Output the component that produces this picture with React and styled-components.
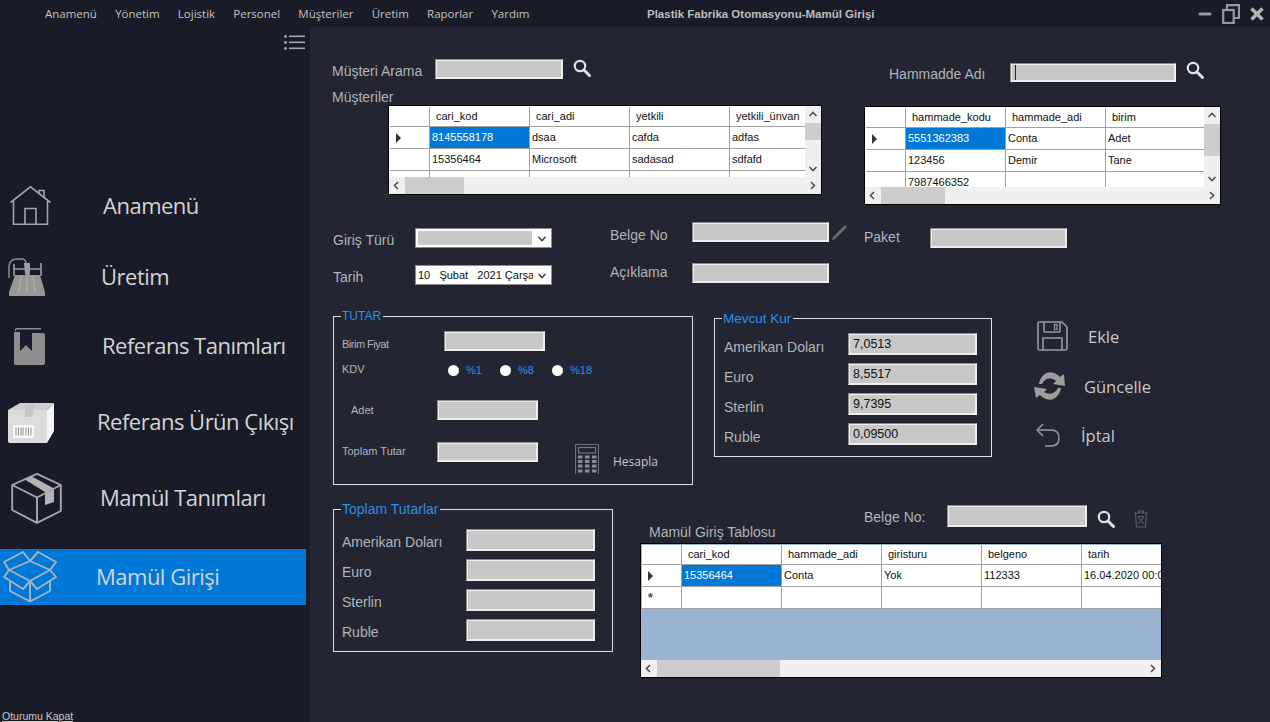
import React from 'react';
import styled, { createGlobalStyle } from 'styled-components';

const GlobalStyle = createGlobalStyle`
  html, body {
    margin: 0;
    padding: 0;
    height: 100%;
    background: #232533;
    overflow: hidden;
  }
  #root { height: 100%; }
`;

const sans = `"Liberation Sans", Arial, sans-serif`;
const humanist = `"Open Sans", "Noto Sans", sans-serif`;

const Page = styled.div`
  width: 1270px;
  height: 722px;
  display: flex;
  flex-direction: column;
  overflow: hidden;
  font-family: ${sans};
`;

const TitleBar = styled.div`
  height: 27px;
  flex: none;
  display: grid;
  grid-template-columns: 647px 1fr auto;
  align-items: center;
  background: #191b28;
`;

const Menu = styled.div`
  display: flex;
  gap: 18.2px;
  padding-left: 45px;
  font: 11.5px ${humanist};
  color: #c4c4c4;
`;

const WindowTitle = styled.div`
  font: bold 11.5px ${sans};
  color: #bdbdbd;
`;

const WinButtons = styled.div`
  display: flex;
  align-items: center;
  gap: 10px;
  padding-right: 6px;
  color: #9a9a9a;
`;

const Body = styled.div`
  flex: 1;
  display: flex;
  min-height: 0;
`;

const Sidebar = styled.aside`
  width: 310px;
  flex: none;
  display: flex;
  flex-direction: column;
  background: #191b28;
`;

const ListToggle = styled.div`
  height: 151px;
  padding: 8px 1px 0 0;
  width: 306px;
  box-sizing: border-box;
  display: flex;
  justify-content: flex-end;
  align-items: flex-start;
`;

const NavItem = styled.div`
  width: 306px;
  height: 56px;
  flex: none;
  display: flex;
  align-items: center;
  margin-top: ${(p) => p.$gap}px;
  background: ${(p) => (p.$active ? '#0078d7' : 'transparent')};
`;

const NavIcon = styled.div`
  width: ${(p) => p.$labelX}px;
  flex: none;
  box-sizing: border-box;
  padding-left: ${(p) => p.$iconX}px;
  display: flex;
  align-items: center;
`;

const NavLabel = styled.span`
  font: 22px ${humanist};
  letter-spacing: -0.5px;
  color: #d4d4d4;
  white-space: nowrap;
  padding-bottom: 2px;
`;

const LogoutLink = styled.a`
  margin-top: auto;
  padding-left: 2px;
  height: 12px;
  font: 10.5px/12px ${sans};
  color: #c8c8c8;
  text-decoration: underline;
`;

const Main = styled.main`
  flex: 1;
  background: #232533;
  padding-left: 22px;
  color: #b1b4b8;
  font-size: 14px;
`;

const TopRow = styled.div`
  display: flex;
  height: 195px;
`;

const CustomerBlock = styled.section`
  width: 532px;
  flex: none;
  padding-top: 32px;
`;

const MaterialBlock = styled.section`
  flex: 1;
  padding-top: 36px;
`;

const Inline = styled.div`
  display: flex;
  align-items: center;
  margin-left: ${(p) => p.$left || 0}px;
  margin-top: ${(p) => p.$top || 0}px;
`;

const Label = styled.span`
  width: ${(p) => (p.$width ? `${p.$width}px` : 'auto')};
  flex: none;
  white-space: nowrap;
  font-size: ${(p) => p.$size || 14}px;
  letter-spacing: ${(p) => p.$tracking || 0}px;
  transform: translateY(${(p) => p.$shift || 0}px);
`;

const ListCaption = styled.div`
  height: 16px;
  margin-top: 10px;
  line-height: 16px;
  white-space: nowrap;
`;

const TextBox = styled.div`
  width: ${(p) => p.$width}px;
  height: ${(p) => p.$height || 20}px;
  flex: none;
  box-sizing: border-box;
  background: #c8c8c8;
  border: 1px solid #8c8c8c;
  border-right-color: #eee;
  border-bottom-color: #eee;
  box-shadow: inset 0 0 0 1px #eee;
  padding: 0 0 0 4px;
  display: flex;
  align-items: center;
  font-size: 12.5px;
  color: #111;
`;

const Caret = styled.span`
  width: 1px;
  height: 15px;
  background: #222;
`;

const SearchButton = styled.div`
  margin-left: ${(p) => p.$left || 10}px;
  display: flex;
  transform: translateY(${(p) => p.$shift || 0}px);
`;

const Spacer = styled.div`
  height: ${(p) => p.$height}px;
`;

const GridFrame = styled.div`
  width: ${(p) => p.$width}px;
  height: ${(p) => p.$height}px;
  box-sizing: border-box;
  border: 1px solid #000;
  background: #fff;
  display: grid;
  grid-template-columns: ${(p) => (p.$vbar ? '1fr 16px' : '1fr')};
  grid-template-rows: 1fr 17px;
  margin-left: ${(p) => p.$left || 0}px;
  color: #111;
  font-size: 11px;
`;

const GridBody = styled.div`
  overflow: hidden;
  padding-top: 1px;
  padding-left: 1px;
  background: ${(p) => p.$empty || '#fff'};
`;

const GridRow = styled.div`
  display: flex;
  height: ${(p) => (p.$head ? 20 : 22)}px;
  width: max-content;
  box-sizing: border-box;
  background: #fff;
  border-bottom: 1px solid #a0a0a0;
`;

const RowHeader = styled.div`
  width: 40px;
  flex: none;
  box-sizing: border-box;
  border-right: 1px solid #a0a0a0;
  display: flex;
  align-items: center;
  padding-left: 5px;
  color: #444;
`;

const Triangle = styled.span`
  width: 0;
  height: 0;
  margin-left: 1px;
  border-left: 5px solid #333;
  border-top: 5px solid transparent;
  border-bottom: 5px solid transparent;
`;

const NewRowStar = styled.span`
  font-size: 12px;
  font-weight: bold;
  margin-left: 1px;
  line-height: 12px;
`;

const Cell = styled.div`
  width: 100px;
  flex: none;
  box-sizing: border-box;
  border-right: 1px solid #a0a0a0;
  padding-left: ${(p) => (p.$head ? 6 : 2)}px;
  padding-bottom: 1px;
  display: flex;
  align-items: center;
  white-space: nowrap;
  overflow: hidden;
  background: ${(p) => (p.$selected ? '#0078d7' : '#fff')};
  color: ${(p) => (p.$selected ? '#fff' : '#111')};
`;

const VBar = styled.div`
  grid-row: 1;
  grid-column: 2;
  background: #f0f0f0;
  display: flex;
  flex-direction: column;
  align-items: center;
`;

const VThumb = styled.div`
  width: 100%;
  height: ${(p) => p.$size}px;
  flex: none;
  background: #cdcdcd;
`;

const VSpace = styled.div`
  flex: 1;
`;

const ArrowCell = styled.div`
  height: 17px;
  width: 16px;
  flex: none;
  display: flex;
  align-items: center;
  justify-content: center;
  color: #505050;
`;

const HBar = styled.div`
  grid-row: 2;
  grid-column: 1 / -1;
  background: #f0f0f0;
  display: flex;
  align-items: stretch;
`;

const HThumb = styled.div`
  width: ${(p) => p.$size}px;
  flex: none;
  background: #cdcdcd;
`;

const HSpace = styled.div`
  flex: 1;
`;

const FormRow = styled.div`
  display: flex;
  height: 63px;
`;

const FormColumn = styled.div`
  width: ${(p) => p.$width}px;
  flex: none;
  box-sizing: border-box;
  padding-top: ${(p) => p.$top || 0}px;
  padding-left: ${(p) => p.$left || 0}px;
`;

const SelectBox = styled.div`
  width: 137px;
  height: 20px;
  box-sizing: border-box;
  flex: none;
  background: #fff;
  border: 1px solid #8c8c8c;
  display: flex;
  align-items: center;
  padding: 2px 0 2px 2px;
  color: #111;
  font-size: 11px;
  white-space: nowrap;
  overflow: hidden;
`;

const SelectFill = styled.div`
  width: 114px;
  height: 100%;
  background: #c8c8c8;
`;

const SelectText = styled.div`
  width: 115px;
  overflow: hidden;
  white-space: pre;
`;

const SelectArrow = styled.div`
  flex: 1;
  display: flex;
  justify-content: center;
  color: #444;
`;

const MiddleRow = styled.div`
  display: flex;
  margin-top: 24px;
`;

const Group = styled.fieldset`
  margin: 0;
  margin-left: ${(p) => p.$left || 0}px;
  margin-top: ${(p) => p.$top || 0}px;
  padding: 0;
  width: ${(p) => p.$width}px;
  height: ${(p) => p.$height}px;
  box-sizing: border-box;
  border: 1px solid #dedede;
  flex: none;
`;

const GroupTitle = styled.legend`
  margin-left: 7px;
  padding: 0 2px 0 1px;
  font-size: ${(p) => p.$size || 13}px;
  line-height: 15px;
  color: #2b90e8;
`;

const TutarRow = styled.div`
  display: flex;
  align-items: ${(p) => p.$align || 'center'};
  height: ${(p) => p.$height || 20}px;
  margin-top: ${(p) => p.$top}px;
  padding-left: ${(p) => p.$left || 8}px;
`;

const Radio = styled.span`
  width: 11px;
  height: 11px;
  flex: none;
  border-radius: 50%;
  background: #fff;
  margin-right: 7px;
`;

const RadioLabel = styled.span`
  width: 34px;
  flex: none;
  color: #2b90e8;
  font-size: 11px;
`;

const HesaplaLabel = styled.span`
  font: 12px ${humanist};
  color: #c8c8c8;
  margin-left: 14px;
  padding-top: 4px;
`;

const CalcButton = styled.div`
  display: flex;
  align-items: center;
  margin-left: 37px;
  padding-top: 2px;
`;

const RatesList = styled.div`
  display: flex;
  flex-direction: column;
  gap: 8px;
  padding: ${(p) => p.$top}px ${(p) => p.$right}px 0 ${(p) => p.$left}px;
`;

const RateRow = styled.div`
  display: flex;
  align-items: center;
  justify-content: space-between;
`;

const Actions = styled.div`
  margin-left: 45px;
  padding-top: 4px;
  display: flex;
  flex-direction: column;
`;

const ActionButton = styled.div`
  display: flex;
  align-items: center;
  height: ${(p) => p.$height}px;
  font: 16.5px ${humanist};
  color: #c8c8c8;
  margin-left: ${(p) => p.$iconLeft || 0}px;
`;

const ActionIcon = styled.div`
  width: ${(p) => p.$width}px;
  flex: none;
  display: flex;
`;

const BottomRow = styled.div`
  display: flex;
  margin-top: 17px;
`;

const EntryBlock = styled.section`
  margin-left: 27px;
  padding-top: 3px;
`;

const TableTitle = styled.div`
  margin: -3px 0 0 9px;
  height: 19px;
`;

const IconBase = styled.svg`
  display: block;
  flex: none;
`;

const Chevron = ({ dir }) => {
  const paths = {
    up: 'M1.5 6 L5 2.5 L8.5 6',
    down: 'M1.5 3 L5 6.5 L8.5 3',
    left: 'M6 1 L2.5 4.5 L6 8',
    right: 'M3 1 L6.5 4.5 L3 8',
  };
  return (
    <IconBase width="10" height="9" viewBox="0 0 10 9" fill="none" stroke="currentColor" strokeWidth="1.6">
      <path d={paths[dir]} />
    </IconBase>
  );
};

const SearchIcon = () => (
  <IconBase width="18" height="18" viewBox="0 0 18 18" fill="none" stroke="#e2e2e2">
    <circle cx="7" cy="7" r="5.2" strokeWidth="2.2" />
    <path d="M11 11 L16.5 16.5" strokeWidth="3" strokeLinecap="round" />
  </IconBase>
);

const ListIcon = () => (
  <IconBase width="21" height="15" viewBox="0 0 21 15" fill="#a8a8a8">
    <circle cx="1.5" cy="1.5" r="1.4" />
    <circle cx="1.5" cy="7.5" r="1.4" />
    <circle cx="1.5" cy="13.5" r="1.4" />
    <rect x="5" y="0.5" width="16" height="1.6" />
    <rect x="5" y="6.5" width="16" height="1.6" />
    <rect x="5" y="12.5" width="16" height="1.6" />
  </IconBase>
);

const HomeIcon = () => (
  <IconBase width="42" height="40" viewBox="0 0 42 40" fill="none" stroke="#a4a4a4" strokeWidth="1.6">
    <path d="M0.5 16.5 L20.5 0.8 L40.5 16.5" />
    <path d="M29 8 V4.5 H34 V12" />
    <path d="M3.5 14.5 V38.3 H37.5 V14.5" />
    <path d="M15 38 V22.5 H26 V38" />
  </IconBase>
);

const CncIcon = () => (
  <IconBase width="38" height="38" viewBox="0 0 38 38">
    <path d="M7 17 H32 L37 34 V38 H1 V34 Z" fill="#979797" />
    <path d="M13 18 L11 34 M19 18 V34 M25 18 L27 34" stroke="#adadad" strokeWidth="1.5" />
    <path d="M1 20 V9 C1 2 5 1 9 1 H14 C17 1 18 3 18 6" fill="none" stroke="#8d8d8d" strokeWidth="1.5" />
    <path d="M6 18 V6 M33 18 V5 M6 11 H33" fill="none" stroke="#9a9a9a" strokeWidth="1.6" />
    <path d="M16 5 H22 V16 L19.5 20 L17 16 Z" fill="#9d9d9d" />
  </IconBase>
);

const BookmarkIcon = () => (
  <IconBase width="31" height="37" viewBox="0 0 31 37">
    <path d="M1 2 Q1 0 3 0 H27 V1.6 H3 Q2 1.6 2 3 H1 Z" fill="#8e8e8e" />
    <path d="M0 4 H6 V23 L12 17 L18 23 V5 H29 Q31 5 31 7 V35 Q31 37 29 37 H2 Q0 37 0 35 Z" fill="#8e8e8e" />
  </IconBase>
);

const BarcodeBoxIcon = () => (
  <IconBase width="47" height="41" viewBox="0 0 47 41">
    <path d="M0 8 L12 1 H46 L39 8 Z" fill="#cfcfcf" />
    <path d="M0 8 H39 V41 H2 Q0 41 0 39 Z" fill="#dcdcdc" />
    <path d="M39 8 L46 1 V29 L39 41 Z" fill="#f4f4f4" />
    <path d="M17 4 L26 1 V8 L24 15 H17 Z" fill="#c6c6c6" />
    <rect x="5" y="23" width="21" height="13" rx="1" fill="#fafafa" />
    <path d="M8 25.5 V33.5 M10.5 25.5 V33.5 M13 25.5 V33.5 M15 25.5 V33.5 M18 25.5 V33.5 M20.5 25.5 V33.5 M23 25.5 V33.5" stroke="#8c8c8c" strokeWidth="1" />
  </IconBase>
);

const ClosedBoxIcon = () => (
  <IconBase width="51" height="51" viewBox="0 0 51 51">
    <path d="M13 6 L20 3 L43 15.5 V29 L34 32 V19 Z" fill="#b4b4b4" />
    <path d="M26 0.8 L49.8 12 V38 L26 49.8 L1.2 37 V12 Z M1.2 12 L26 24.5 L49.8 12 M26 24.5 V49.8" fill="none" stroke="#a8a8a8" strokeWidth="1.9" strokeLinejoin="round" />
  </IconBase>
);

const OpenBoxIcon = () => (
  <IconBase width="55" height="52" viewBox="0 0 55 52" fill="none" stroke="#a9b3bd" strokeWidth="1.9" strokeLinejoin="round">
    <path d="M27 10 L20 1 L1 11 L6 19 L27 30 L47 19 L53 11 L35 1 Z" />
    <path d="M6 19 L27 10 L47 19" />
    <path d="M6 19 L1 26 L20 38 L27 30 L34 38 L53 26 L47 19" />
    <path d="M7 29 V40 L27 50.5 L47 40 V29 M27 30 V50.5" />
  </IconBase>
);

const PencilIcon = () => (
  <IconBase width="17" height="17" viewBox="0 0 17 17" fill="#6d6d6d">
    <path d="M14 1 L16 3 L4 15 L1 16 L2 13 Z" />
  </IconBase>
);

const CalculatorIcon = () => (
  <IconBase width="24" height="30" viewBox="0 0 24 30">
    <path d="M0.5 30 V0.5 H23.5 V30" fill="none" stroke="#6f7073" strokeWidth="1.2" />
    <rect x="3.5" y="3.5" width="17" height="5.5" fill="none" stroke="#77787b" strokeWidth="1.2" />
    {[11.5, 16, 20.5, 25.5].map((y) =>
      [3, 10, 17].map((x) => (
        <rect key={`${x}-${y}`} x={x} y={y} width="4.5" height="3" fill="#8c8d90" />
      ))
    )}
  </IconBase>
);

const FloppyIcon = () => (
  <IconBase width="31" height="30" viewBox="0 0 31 30" fill="none" stroke="#9a9a9a" strokeWidth="1.6">
    <path d="M2 1 H25 L30 6 V27 Q30 29 28 29 H3 Q1 29 1 27 V2 Q1 1 2 1 Z" />
    <path d="M7 1 V10 Q7 11 8 11 H22 Q23 11 23 10 V1" />
    <rect x="17.5" y="3.5" width="2.5" height="5" strokeWidth="1.2" />
    <path d="M6 29 V17 H25 V29" />
  </IconBase>
);

const RefreshIcon = () => (
  <IconBase width="32" height="34" viewBox="0 0 32 34" fill="#9d9d9d">
    <path d="M5 15 C6 7 13 1 20 4 C23 5 25 7 26 8 L30 5 L31 17 L19 15 L22 12 C17 8 11 9 8 15 Z" />
    <path d="M27 19 C26 27 19 33 12 30 C9 29 7 27 6 26 L2 29 L0 18 L13 20 L10 23 C15 26 21 25 24 19 Z" />
  </IconBase>
);

const UndoIcon = () => (
  <IconBase width="24" height="24" viewBox="0 0 24 24" fill="none" stroke="#9a9a9a" strokeWidth="1.5">
    <path d="M7 1 L1 7 L7 13" />
    <path d="M1 7 H15 C20 7 23 10 23 15 C23 20 20 23 15 23 H9" />
  </IconBase>
);

const TrashIcon = () => (
  <IconBase width="16" height="18" viewBox="0 0 16 18" fill="none" stroke="#5f6067" strokeWidth="1.1">
    <path d="M1 3 H15 M5.5 3 V1 H10.5 V3" />
    <path d="M2.5 3 L3.5 17 H12.5 L13.5 3" />
    <path d="M5 7 L11 14 M11 7 L5 14 M5 6.5 H11" />
  </IconBase>
);

const NAV_ITEMS = [
  { label: 'Anamenü', Icon: HomeIcon, iconX: 10, labelX: 103, gap: 0 },
  { label: 'Üretim', Icon: CncIcon, iconX: 8, labelX: 101, gap: 15 },
  { label: 'Referans Tanımları', Icon: BookmarkIcon, iconX: 14, labelX: 102, gap: 13 },
  { label: 'Referans Ürün Çıkışı', Icon: BarcodeBoxIcon, iconX: 8, labelX: 97, gap: 20 },
  { label: 'Mamül Tanımları', Icon: ClosedBoxIcon, iconX: 11, labelX: 100, gap: 20 },
  { label: 'Mamül Girişi', Icon: OpenBoxIcon, iconX: 3, labelX: 96, gap: 23, active: true },
];

const MENU_ITEMS = ['Anamenü', 'Yönetim', 'Lojistik', 'Personel', 'Müşteriler', 'Üretim', 'Raporlar', 'Yardım'];

const RATES = [
  { label: 'Amerikan Doları', value: '7,0513' },
  { label: 'Euro', value: '8,5517' },
  { label: 'Sterlin', value: '9,7395' },
  { label: 'Ruble', value: '0,09500' },
];

const DataGrid = ({ width, height, left, columns, rows, vThumb, hThumb, empty }) => (
  <GridFrame $width={width} $height={height} $left={left} $vbar={vThumb != null}>
    <GridBody $empty={empty}>
      <GridRow $head>
        <RowHeader />
        {columns.map((col) => (
          <Cell $head key={col}>{col}</Cell>
        ))}
      </GridRow>
      {rows.map((row, i) => (
        <GridRow key={i}>
          <RowHeader>
            {row.marker === 'current' && <Triangle />}
            {row.marker === 'new' && <NewRowStar>*</NewRowStar>}
          </RowHeader>
          {row.cells.map((text, j) => (
            <Cell key={j} $selected={row.marker === 'current' && j === 0}>{text}</Cell>
          ))}
        </GridRow>
      ))}
    </GridBody>
    {vThumb != null && (
      <VBar>
        <ArrowCell><Chevron dir="up" /></ArrowCell>
        <VThumb $size={vThumb} />
        <VSpace />
        <ArrowCell><Chevron dir="down" /></ArrowCell>
      </VBar>
    )}
    <HBar>
      <ArrowCell><Chevron dir="left" /></ArrowCell>
      <HThumb $size={hThumb} />
      <HSpace />
      <ArrowCell><Chevron dir="right" /></ArrowCell>
    </HBar>
  </GridFrame>
);

const App = () => (
  <Page>
    <GlobalStyle />
    <TitleBar>
      <Menu>
        {MENU_ITEMS.map((item) => (
          <span key={item}>{item}</span>
        ))}
      </Menu>
      <WindowTitle>Plastik Fabrika Otomasyonu-Mamül Girişi</WindowTitle>
      <WinButtons>
        <IconBase width="14" height="6" viewBox="0 0 14 6" fill="none" stroke="currentColor" strokeWidth="3" strokeLinecap="round">
          <path d="M2 3 H12" />
        </IconBase>
        <IconBase width="18" height="20" viewBox="0 0 18 20" fill="none" stroke="currentColor" strokeWidth="2.2">
          <path d="M5 6 V1.2 H17 V14 H12" />
          <rect x="1.2" y="6" width="10.5" height="13" />
        </IconBase>
        <IconBase width="14" height="14" viewBox="0 0 14 14" fill="none" stroke="#b4b4b4" strokeWidth="3.4">
          <path d="M1.5 1.5 L12.5 12.5 M12.5 1.5 L1.5 12.5" />
        </IconBase>
      </WinButtons>
    </TitleBar>
    <Body>
      <Sidebar>
        <ListToggle><ListIcon /></ListToggle>
        {NAV_ITEMS.map(({ label, Icon, iconX, labelX, gap, active }) => (
          <NavItem key={label} $gap={gap} $active={active}>
            <NavIcon $iconX={iconX} $labelX={labelX}><Icon /></NavIcon>
            <NavLabel>{label}</NavLabel>
          </NavItem>
        ))}
        <LogoutLink>Oturumu Kapat</LogoutLink>
      </Sidebar>
      <Main>
        <TopRow>
          <CustomerBlock>
            <Inline>
              <Label $width={103} $shift={2}>Müşteri Arama</Label>
              <TextBox $width={128} />
              <SearchButton $left={10} $shift={-1}><SearchIcon /></SearchButton>
            </Inline>
            <ListCaption>Müşteriler</ListCaption>
            <DataGrid
              width={434}
              height={90}
              left={56}
              columns={['cari_kod', 'cari_adi', 'yetkili', 'yetkili_ünvan']}
              vThumb={17}
              hThumb={59}
              rows={[
                { marker: 'current', cells: ['8145558178', 'dsaa', 'cafda', 'adfas'] },
                { cells: ['15356464', 'Microsoft', 'sadasad', 'sdfafd'] },
                { cells: ['11213', 'Tencent', '424', '1234313'] },
              ]}
            />
          </CustomerBlock>
          <MaterialBlock>
            <Inline $left={25}>
              <Label $width={121} $shift={1}>Hammadde Adı</Label>
              <TextBox $width={166} $height={19}><Caret /></TextBox>
              <SearchButton $left={10} $shift={-3}><SearchIcon /></SearchButton>
            </Inline>
            <Spacer $height={24} />
            <DataGrid
              width={357}
              height={99}
              columns={['hammade_kodu', 'hammade_adi', 'birim']}
              vThumb={32}
              hThumb={64}
              rows={[
                { marker: 'current', cells: ['5551362383', 'Conta', 'Adet'] },
                { cells: ['123456', 'Demir', 'Tane'] },
                { cells: ['7987466352', '', ''] },
              ]}
            />
          </MaterialBlock>
        </TopRow>
        <FormRow>
          <FormColumn $width={278} $top={6} $left={1}>
            <Inline>
              <Label $width={82} $shift={2}>Giriş Türü</Label>
              <SelectBox>
                <SelectFill />
                <SelectArrow><Chevron dir="down" /></SelectArrow>
              </SelectBox>
            </Inline>
            <Inline $top={17}>
              <Label $width={82} $shift={2}>Tarih</Label>
              <SelectBox>
                <SelectText>{'10   Şubat   2021 Çarşamba'}</SelectText>
                <SelectArrow><Chevron dir="down" /></SelectArrow>
              </SelectBox>
            </Inline>
          </FormColumn>
          <FormColumn $width={254}>
            <Inline>
              <Label $width={82} $shift={3}>Belge No</Label>
              <TextBox $width={137} />
              <SearchButton $left={2}><PencilIcon /></SearchButton>
            </Inline>
            <Inline $top={21}>
              <Label $width={82} $shift={-1}>Açıklama</Label>
              <TextBox $width={137} />
            </Inline>
          </FormColumn>
          <FormColumn $width={220} $top={6}>
            <Inline>
              <Label $width={66} $shift={-1}>Paket</Label>
              <TextBox $width={137} />
            </Inline>
          </FormColumn>
        </FormRow>
        <MiddleRow>
          <Group $width={360} $height={176} $left={1}>
            <GroupTitle $size={12}>TUTAR</GroupTitle>
            <TutarRow $top={7}>
              <Label $width={102} $size={11} $shift={3} $tracking={-0.5}>Birim Fiyat</Label>
              <TextBox $width={101} />
            </TutarRow>
            <TutarRow $top={9}>
              <Label $width={106} $size={11} $shift={-1}>KDV</Label>
              <Radio /><RadioLabel>%1</RadioLabel>
              <Radio /><RadioLabel>%8</RadioLabel>
              <Radio /><RadioLabel>%18</RadioLabel>
            </TutarRow>
            <TutarRow $top={20} $left={17}>
              <Label $width={86} $size={11}>Adet</Label>
              <TextBox $width={101} />
            </TutarRow>
            <TutarRow $top={22} $align="flex-start" $height={30}>
              <Label $width={95} $size={11} $shift={3}>Toplam Tutar</Label>
              <TextBox $width={101} />
              <CalcButton>
                <CalculatorIcon />
                <HesaplaLabel>Hesapla</HesaplaLabel>
              </CalcButton>
            </TutarRow>
          </Group>
          <Group $width={278} $height={146} $left={21} $top={2}>
            <GroupTitle $size={13.5}>Mevcut Kur</GroupTitle>
            <RatesList $top={7} $right={14} $left={9}>
              {RATES.map((rate) => (
                <RateRow key={rate.label}>
                  <Label $shift={3}>{rate.label}</Label>
                  <TextBox $width={129} $height={22}>{rate.value}</TextBox>
                </RateRow>
              ))}
            </RatesList>
          </Group>
          <Actions>
            <ActionButton $height={46}>
              <ActionIcon $width={51}><FloppyIcon /></ActionIcon>
              Ekle
            </ActionButton>
            <ActionButton $height={54} $iconLeft={-3}>
              <ActionIcon $width={50}><RefreshIcon /></ActionIcon>
              Güncelle
            </ActionButton>
            <ActionButton $height={44} $iconLeft={-1}>
              <ActionIcon $width={45}><UndoIcon /></ActionIcon>
              İptal
            </ActionButton>
          </Actions>
        </MiddleRow>
        <BottomRow>
          <Group $width={280} $height={150} $left={1}>
            <GroupTitle $size={14}>Toplam Tutarlar</GroupTitle>
            <RatesList $top={12} $right={17} $left={8}>
              {RATES.map((rate) => (
                <RateRow key={rate.label}>
                  <Label $shift={2}>{rate.label}</Label>
                  <TextBox $width={129} $height={22} />
                </RateRow>
              ))}
            </RatesList>
          </Group>
          <EntryBlock>
            <Inline $left={224}>
              <Label $width={83} $shift={1}>Belge No:</Label>
              <TextBox $width={140} $height={22} />
              <SearchButton $left={10} $shift={3}><SearchIcon /></SearchButton>
              <SearchButton $left={18} $shift={3}><TrashIcon /></SearchButton>
            </Inline>
            <TableTitle>Mamül Giriş Tablosu</TableTitle>
            <DataGrid
              width={522}
              height={135}
              empty="#9ab3d1"
              columns={['cari_kod', 'hammade_adi', 'giristuru', 'belgeno', 'tarih']}
              hThumb={123}
              rows={[
                { marker: 'current', cells: ['15356464', 'Conta', 'Yok', '112333', '16.04.2020 00:00:00'] },
                { marker: 'new', cells: ['', '', '', '', ''] },
              ]}
            />
          </EntryBlock>
        </BottomRow>
      </Main>
    </Body>
  </Page>
);

export default App;
